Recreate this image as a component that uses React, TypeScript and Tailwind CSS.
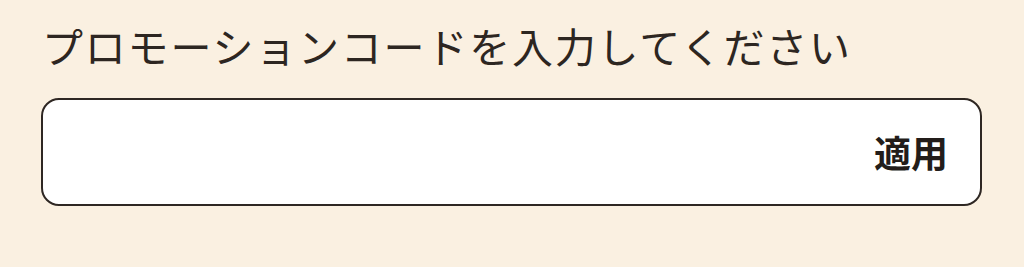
import { useState } from 'react';

export default function App() {
  const [code, setCode] = useState('');

  return (
    <div
      className="w-[1024px] h-[267px] bg-[#faf0e1] pl-[41px] pr-[42px] pt-[25px]"
      style={{ fontFamily: '"Noto Sans CJK JP", "Noto Sans", sans-serif' }}
    >
      <label className="block text-[41px] leading-[41px] text-[#2d2621] pl-[1px] tracking-[1.8px]">
        プロモーションコードを入力してください
      </label>
      <div className="mt-[32px] h-[108px] rounded-[18px] border-2 border-[#2e2723] bg-white flex items-center pl-6 pr-[32px]">
        <input
          type="text"
          value={code}
          onChange={(e) => setCode(e.target.value)}
          className="flex-1 min-w-0 h-full bg-transparent outline-none text-[34px] text-[#2d2621]"
        />
        <button className="text-[37px] font-bold leading-none text-[#231d1a]">適用</button>
      </div>
    </div>
  );
}
